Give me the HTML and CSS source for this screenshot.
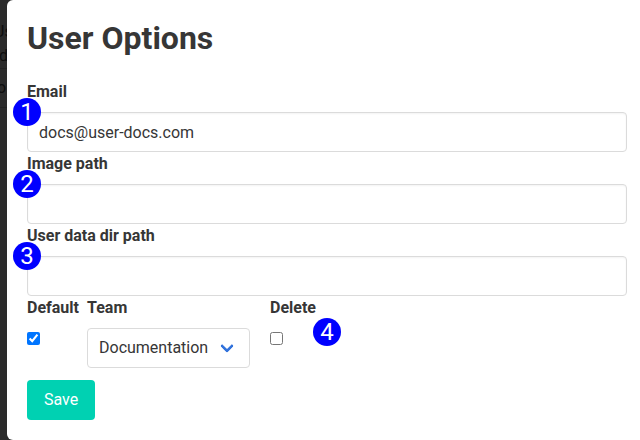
FILE: index.html
```html
<!DOCTYPE html>
<html lang="en">
<head>
<meta charset="utf-8">
<title>User Options</title>
<link rel="stylesheet" href="styles.css">
</head>
<body>
<div class="backdrop" aria-hidden="true">
  <span class="behind behind-user">Us</span>
  <span class="behind behind-docs">d</span>
  <span class="behind behind-row">o</span>
</div>
<form class="box">
  <h1 class="title">User Options</h1>
  <div class="field">
    <label class="label" for="email">Email</label>
    <input class="input" id="email" type="text" value="docs@user-docs.com">
    <span class="badge">1</span>
  </div>
  <div class="field">
    <label class="label" for="image">Image path</label>
    <input class="input" id="image" type="text">
    <span class="badge">2</span>
  </div>
  <div class="field">
    <label class="label" for="data">User data dir path</label>
    <input class="input" id="data" type="text">
    <span class="badge">3</span>
  </div>
  <div class="options">
    <div class="option">
      <label class="label" for="default">Default</label>
      <input class="check" id="default" type="checkbox" checked>
    </div>
    <div class="option">
      <label class="label" for="team">Team</label>
      <div class="select"><select id="team"><option>Documentation</option></select></div>
    </div>
    <div class="option">
      <label class="label" for="delete">Delete</label>
      <input class="check" id="delete" type="checkbox">
      <span class="badge badge-delete">4</span>
    </div>
  </div>
  <button class="save" type="button">Save</button>
</form>
</body>
</html>
```
FILE: styles.css
```css
*, *::before, *::after {
  box-sizing: border-box;
}

body {
  margin: 0;
  height: 440px;
  padding-left: 7px;
  overflow: hidden;
  background: #2b2b2b;
  color: #363636;
  font: 16px/24px Roboto, sans-serif;
}

.backdrop {
  position: absolute;
  top: 0;
  left: 0;
  width: 7px;
  height: 440px;
  overflow: hidden;
  background: linear-gradient(#2b2b2b 68px, #232323 68px 69px, #2b2b2b 69px 107px, #232323 107px 108px, #2b2b2b 108px);
}

.behind {
  position: absolute;
  color: #0e0e0e;
}

.behind-user { top: 20px; left: -6px; }
.behind-docs { top: 44px; left: -1px; }
.behind-row { top: 76px; left: -3px; }

.box {
  position: relative;
  width: 640px;
  height: 440px;
  padding: 20px;
  border-radius: 6px;
  background: #fff;
}

.title {
  margin: 0 0 24px;
  font-size: 32px;
  font-weight: 700;
  line-height: 36px;
}

.field {
  position: relative;
  width: 600px;
}

.label {
  display: block;
  margin-bottom: 8px;
  font-weight: 700;
}

.input {
  display: block;
  width: 100%;
  height: 40px;
  padding: 7px 11px;
  border: 1px solid #dbdbdb;
  border-radius: 4px;
  background: #fff;
  box-shadow: inset 0 1px 2px rgba(10, 10, 10, 0.05);
  color: #363636;
  font: inherit;
}

.badge {
  position: absolute;
  top: 18px;
  left: -14px;
  width: 28px;
  height: 28px;
  border-radius: 50%;
  background: #00f;
  color: #fff;
  font-size: 24px;
  line-height: 28px;
  text-align: center;
}

.options {
  display: grid;
  grid-template-columns: 60px 183px auto;
  height: 84px;
}

.option {
  position: relative;
}

.check {
  display: block;
  width: 13px;
  height: 13px;
  margin: 12px 0 0;
}

.badge-delete {
  top: 22px;
  left: 43px;
}

.select {
  position: relative;
  width: 163px;
}

.select::after {
  content: "";
  position: absolute;
  top: 13px;
  right: 18px;
  width: 10px;
  height: 10px;
  border: 3px solid #3273dc;
  border-top: 0;
  border-right: 0;
  border-radius: 2px;
  transform: rotate(-45deg);
}

.select select {
  display: block;
  width: 100%;
  height: 40px;
  padding: 7px 40px 7px 11px;
  border: 1px solid #dbdbdb;
  border-radius: 4px;
  background: #fff;
  color: #363636;
  font: inherit;
  appearance: none;
}

.save {
  display: block;
  width: 68px;
  height: 40px;
  padding: 0;
  border: 0;
  border-radius: 4px;
  background: #00d1b2;
  color: #fff;
  font: inherit;
}
```
